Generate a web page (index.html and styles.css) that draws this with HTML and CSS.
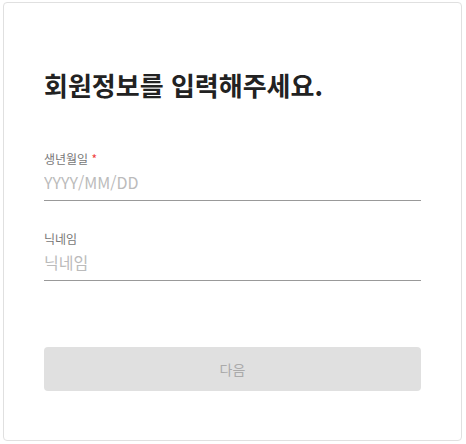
FILE: index.html
```html
<!DOCTYPE html>
<html lang="ko">
<head>
  <meta charset="UTF-8">
  <title>회원정보 입력</title>
  <link rel="stylesheet" href="styles.css">
</head>
<body>
  <div class="card">
    <h1 class="title">회원정보를 입력해주세요.</h1>

    <div class="field">
      <label class="label" for="birth">생년월일 <span class="req">*</span></label>
      <input class="input" id="birth" type="text" placeholder="YYYY/MM/DD">
    </div>

    <div class="field">
      <label class="label" for="nick">닉네임</label>
      <input class="input" id="nick" type="text" placeholder="닉네임">
    </div>

    <button class="next" disabled>다음</button>
  </div>
</body>
</html>
```

FILE: styles.css
```css
body { margin: 0; padding: 2px 4px 0 3px; font-family: "Noto Sans CJK KR", "Noto Sans", sans-serif; background: #fff; }
.card { box-sizing: border-box; width: 459px; height: 439px; border: 1px solid #e0e0e0; border-radius: 4px; padding: 0 40px; }
.title { margin: 64px 0 48px; font-size: 26px; font-weight: 700; color: #222; line-height: 36px; }
.field { display: flex; flex-direction: column; margin-bottom: 30px; }
.label { font-size: 12px; color: #777; line-height: 16px; }
.req { color: #f04040; font-size: 12px; }
.input { border: none; border-bottom: 1px solid #999; padding: 3px 0 6px; font-family: inherit; font-size: 16px; color: #333; outline: none; line-height: 24px; }
.input::placeholder { color: #bbb; }
.next { display: block; width: 100%; height: 44px; margin-top: 66px; border: none; border-radius: 4px; background: #e0e0e0; color: #aaa; font-family: inherit; font-size: 14px; }
```
